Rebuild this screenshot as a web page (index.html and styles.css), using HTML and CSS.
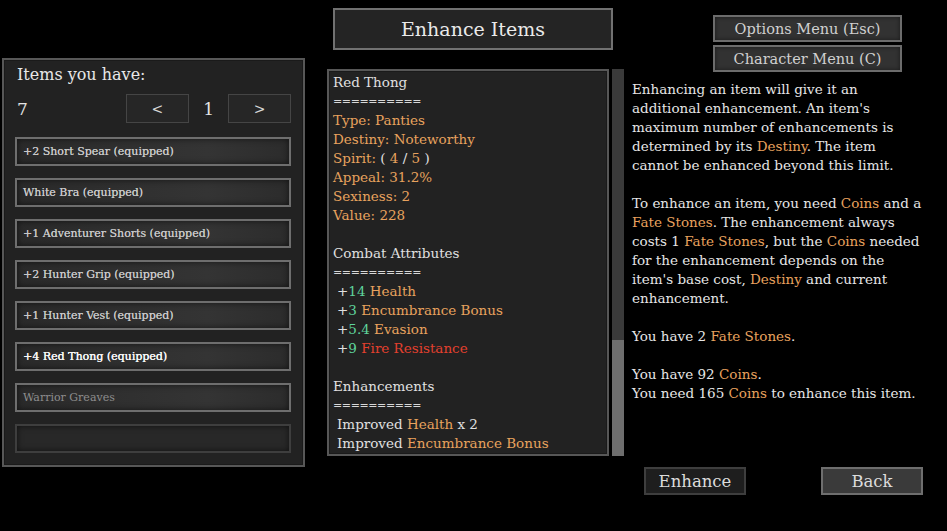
FILE: index.html
```html
<!DOCTYPE html>
<html>
<head>
<meta charset="utf-8">
<link rel="stylesheet" href="styles.css">
</head>
<body>
<div class="screen">
  <section class="left">
    <div class="panel items">
      <div class="items-title">Items you have:</div>
      <div class="pager">
        <span class="count">7</span>
        <button class="nav">&lt;</button>
        <span class="page">1</span>
        <button class="nav">&gt;</button>
      </div>
      <div class="row">+2 Short Spear (equipped)</div>
      <div class="row">White Bra (equipped)</div>
      <div class="row">+1 Adventurer Shorts (equipped)</div>
      <div class="row">+2 Hunter Grip (equipped)</div>
      <div class="row">+1 Hunter Vest (equipped)</div>
      <div class="row selected">+4 Red Thong (equipped)</div>
      <div class="row dim">Warrior Greaves</div>
      <div class="row empty"></div>
    </div>
  </section>

  <section class="middle">
    <div class="title-box">Enhance Items</div>
    <div class="detail-wrap">
      <div class="panel detail">
        <div>Red Thong</div>
        <div class="sep">==========</div>
        <div class="o">Type: Panties</div>
        <div class="o">Destiny: Noteworthy</div>
        <div class="o">Spirit: <span class="w">( </span>4 <span class="w">/</span> 5<span class="w"> )</span></div>
        <div class="o">Appeal: 31.2%</div>
        <div class="o">Sexiness: 2</div>
        <div class="o">Value: 228</div>
        <div class="gap"></div>
        <div>Combat Attributes</div>
        <div class="sep">==========</div>
        <div class="ind">+<span class="g">14</span> <span class="o">Health</span></div>
        <div class="ind">+<span class="g">3</span> <span class="o">Encumbrance Bonus</span></div>
        <div class="ind">+<span class="g">5.4</span> <span class="o">Evasion</span></div>
        <div class="ind">+<span class="g">9</span> <span class="r">Fire Resistance</span></div>
        <div class="gap"></div>
        <div>Enhancements</div>
        <div class="sep">==========</div>
        <div class="ind">Improved <span class="o">Health</span> x 2</div>
        <div class="ind">Improved <span class="o">Encumbrance Bonus</span></div>
      </div>
      <div class="scrollbar"><div class="thumb"></div></div>
    </div>
  </section>

  <section class="right">
    <div class="menus">
      <button class="menu-btn">Options Menu (Esc)</button>
      <button class="menu-btn">Character Menu (C)</button>
    </div>
    <div class="info">
      <p>Enhancing an item will give it an additional enhancement. An item's maximum number of enhancements is determined by its <span class="o">Destiny</span>. The item cannot be enhanced beyond this limit.</p>
      <p>To enhance an item, you need <span class="o">Coins</span> and a <span class="o">Fate Stones</span>. The enhancement always costs 1 <span class="o">Fate Stones</span>, but the <span class="o">Coins</span> needed for the enhancement depends on the item's base cost, <span class="o">Destiny</span> and current enhancement.</p>
      <p>You have 2 <span class="o">Fate Stones</span>.</p>
      <p>You have 92 <span class="o">Coins</span>.<br>You need 165 <span class="o">Coins</span> to enhance this item.</p>
    </div>
    <div class="actions">
      <button class="act">Enhance</button>
      <button class="act back">Back</button>
    </div>
  </section>
</div>
</body>
</html>
```
FILE: styles.css
```css
* { box-sizing: border-box; }
html, body { margin: 0; padding: 0; background: #000; }
body {
  width: 947px;
  height: 531px;
  overflow: hidden;
  font-family: "DejaVu Serif", serif;
  color: #e4e4e4;
}
button { font-family: inherit; cursor: pointer; }
.screen {
  display: flex;
  height: 531px;
}
.o { color: #e8a25e; }
.g { color: #5fd49c; }
.r { color: #e2402e; }
.w { color: #e4e4e4; }

/* left column */
.left {
  width: 305px;
  padding: 58px 0 0 2px;
}
.panel {
  background: #222;
  border: 2px solid #575757;
  box-shadow: inset 0 0 0 1px #1a1a1a;
}
.items {
  width: 303px;
  height: 409px;
  padding: 4px 12px 0 11px;
}
.items-title {
  font-size: 16px;
  line-height: 22px;
  color: #e8e8e8;
  padding-left: 2px;
}
.pager {
  display: flex;
  align-items: center;
  height: 29px;
  margin-top: 8px;
  margin-bottom: 14px;
}
.count {
  font-size: 17px;
  width: 112px;
  padding-left: 2px;
}
.page {
  font-size: 17px;
  width: 40px;
  text-align: center;
}
.nav {
  width: 63px;
  height: 29px;
  background: #262626;
  border: 1px solid #454545;
  color: #d6d6d6;
  font-size: 14px;
  padding: 0;
}
.row {
  width: 276px;
  height: 29px;
  margin-bottom: 12px;
  border: 2px solid #6e6e6e;
  background: linear-gradient(90deg, #2a2a2a, #343434 70%, #2c2c2c);
  box-shadow: inset 0 0 6px rgba(0,0,0,0.6);
  color: #c8c8c8;
  font-size: 11px;
  line-height: 25px;
  padding-left: 6px;
  white-space: nowrap;
  text-shadow: 0 0 0.4px #c8c8c8;
}
.row.selected { color: #fafafa; text-shadow: 0.3px 0 0 #fafafa; }
.row.dim { color: #8e8e8e; text-shadow: none; }
.row.empty { border-color: #3e3e3e; background: #282828; }

/* middle column */
.middle {
  width: 327px;
  padding-left: 22px;
}
.title-box {
  width: 280px;
  height: 42px;
  margin: 8px 0 19px 6px;
  border: 2px solid #717171;
  background: #242424;
  font-size: 19px;
  line-height: 38px;
  text-align: center;
  color: #eaeaea;
}
.detail-wrap {
  display: flex;
  gap: 3px;
  height: 387px;
}
.detail {
  width: 282px;
  height: 387px;
  padding: 2px 4px;
  font-size: 13.5px;
  line-height: 19px;
  color: #e0e0e0;
  overflow: hidden;
  white-space: nowrap;
}
.detail .sep { font-size: 11px; letter-spacing: -0.4px; color: #d8d8d8; }
.detail .ind { padding-left: 4px; }
.gap { height: 19px; }
.scrollbar {
  width: 12px;
  height: 387px;
  background: #3a3a3a;
  display: flex;
  flex-direction: column;
  justify-content: flex-end;
}
.thumb {
  height: 116px;
  background: #6e6e6e;
}

/* right column */
.right {
  flex: 1;
  display: flex;
  flex-direction: column;
}
.menus {
  display: flex;
  flex-direction: column;
  gap: 3px;
  margin: 15px 0 0 81px;
}
.menu-btn {
  width: 189px;
  height: 27px;
  padding: 0;
  background: #323232;
  border: 2px solid #6c6c6c;
  box-shadow: inset 0 0 4px rgba(0,0,0,0.5);
  color: #d0d0d0;
  font-size: 14.5px;
}
.info {
  margin-top: 8px;
  width: 291px;
  font-size: 13.5px;
  line-height: 19px;
  color: #e6e6e6;
}
.info p { margin: 0 0 19px; }
.actions {
  display: flex;
  gap: 75px;
  margin: auto 0 36px 12px;
}
.act {
  width: 102px;
  height: 28px;
  padding: 0;
  background: #1e1e1e;
  border: 2px solid #3e3e3e;
  color: #dcdcdc;
  font-size: 16.5px;
}
.act.back {
  background: #3a3a3a;
  border-color: #6e6e6e;
}
```
